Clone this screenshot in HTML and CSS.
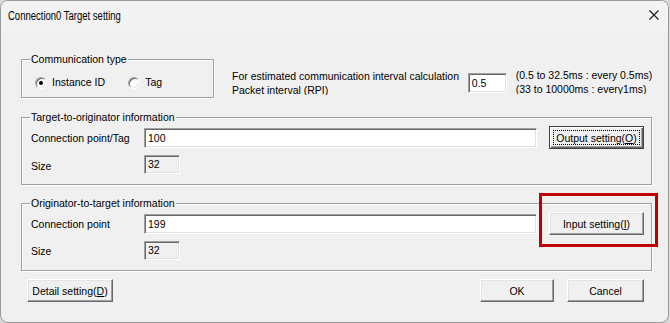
FILE: index.html
```html
<!DOCTYPE html>
<html>
<head>
<meta charset="utf-8">
<link rel="stylesheet" href="styles.css">
</head>
<body>
<div class="window">
  <div class="titlebar">
    <span class="title">Connection0 Target setting</span>
    <svg class="close" width="10" height="10" viewBox="0 0 10 10"><path d="M0.5 0.5 L9.5 9.5 M9.5 0.5 L0.5 9.5" stroke="#1a1a1a" stroke-width="1.1" fill="none"/></svg>
  </div>
  <div class="content">
    <div class="top-row">
      <fieldset class="group group-type">
        <legend>Communication type</legend>
        <div class="radios">
          <label class="radio-item"><span class="radio checked"></span>Instance ID</label>
          <label class="radio-item"><span class="radio"></span>Tag</label>
        </div>
      </fieldset>
      <div class="rpi-label">For estimated communication interval calculation<br>Packet interval (RPI)</div>
      <div class="field rpi-input">0.5</div>
      <div class="rpi-range">(0.5 to 32.5ms : every 0.5ms)<br>(33 to 10000ms : every1ms)</div>
    </div>

    <fieldset class="group info info-t2o">
      <legend>Target-to-originator information</legend>
      <div class="info-grid">
        <span class="lbl">Connection point/Tag</span>
        <div class="field">100</div>
        <button class="btn btn-side default"><span class="focus">Output setting(<u>O</u>)</span></button>
        <span class="lbl lbl-low">Size</span>
        <div class="field disabled size">32</div>
      </div>
    </fieldset>

    <fieldset class="group info info-o2t">
      <legend>Originator-to-target information</legend>
      <div class="info-grid">
        <span class="lbl">Connection point</span>
        <div class="field">199</div>
        <button class="btn btn-side">Input setting(<u>I</u>)</button>
        <span class="lbl">Size</span>
        <div class="field disabled size">32</div>
      </div>
    </fieldset>

    <div class="bottom">
      <button class="btn btn-detail">Detail setting(<u>D</u>)</button>
      <button class="btn btn-ok">OK</button>
      <button class="btn btn-cancel">Cancel</button>
    </div>
  </div>
  <div class="highlight"></div>
</div>
</body>
</html>
```

FILE: styles.css
```css
html, body {
  margin: 0;
  padding: 0;
}
body {
  background: #d9d9d9;
  font-family: "Liberation Sans", Arial, sans-serif;
  font-size: 10.5px;
  color: #000;
}
.window {
  position: relative;
  width: 669px;
  height: 323px;
  box-sizing: border-box;
  border: 1px solid #9a9a9a;
  border-radius: 8px;
  background: #f0f0f0;
  overflow: hidden;
}
.titlebar {
  height: 30px;
  background: #f3f3f3;
  display: flex;
  align-items: center;
  padding-left: 7px;
}
.title {
  font-family: "Liberation Sans", Arial, sans-serif;
  font-size: 12.5px;
  color: #000;
  display: inline-block;
  transform: scaleX(0.76);
  transform-origin: left center;
  white-space: nowrap;
}
.close {
  margin-left: auto;
  margin-right: 9px;
  margin-top: -2px;
}
.content {
  padding: 22px 16px 0 20px;
}
.top-row {
  display: flex;
  align-items: flex-start;
}
.group {
  margin: 0;
  min-width: 0;
  border: 1px solid #a0a0a0;
  box-shadow: 1px 1px 0 #ffffff, inset 1px 1px 0 #ffffff;
  padding: 0 7px 8px 8px;
}
.group legend {
  padding: 0 1px;
  line-height: 13px;
  background: #f0f0f0;
  position: relative;
}
.group-type {
  width: 193px;
  box-sizing: border-box;
  flex: none;
}
.radios {
  display: flex;
  gap: 23px;
  margin-top: 10px;
  padding-left: 5px;
  line-height: 13px;
}
.radio-item {
  display: flex;
  align-items: center;
  gap: 5px;
}
.radio {
  position: relative;
  width: 12px;
  height: 12px;
  box-sizing: border-box;
  border-radius: 50%;
  border: 1px solid;
  border-color: #a0a0a0 #ffffff #ffffff #a0a0a0;
  background: #ffffff;
  box-shadow: inset 1px 1px 0 #696969, inset -1px -1px 0 #e3e3e3;
}
.radio.checked::after {
  content: "";
  position: absolute;
  left: 3px;
  top: 3px;
  width: 4px;
  height: 4px;
  border-radius: 50%;
  background: #000;
}
.rpi-label {
  margin-left: 18px;
  margin-top: 17px;
  line-height: 13.5px;
  height: 25px;
  overflow: hidden;
  white-space: nowrap;
}
.rpi-input {
  margin-left: 9px;
  margin-top: 20px;
  width: 39px;
  flex: none;
}
.rpi-range {
  margin-left: 9px;
  margin-top: 16px;
  line-height: 13.5px;
  height: 25px;
  overflow: hidden;
  white-space: nowrap;
}
.field {
  height: 20px;
  box-sizing: border-box;
  background: #ffffff;
  border: 1px solid;
  border-color: #a0a0a0 #ffffff #ffffff #a0a0a0;
  box-shadow: inset 1px 1px 0 #696969, inset -1px -1px 0 #e3e3e3;
  padding: 0 2px 0 3px;
  line-height: 18px;
  white-space: nowrap;
}
.field.disabled {
  background: #f0f0f0;
}
.field.size {
  width: 36px;
  height: 19px;
  line-height: 17px;
}
.info {
  width: 631px;
  box-sizing: border-box;
  padding: 2px 7px 10px 8px;
}
.info-t2o {
  margin-top: 13px;
}
.info-o2t {
  margin-top: 12px;
}
.info-grid {
  display: grid;
  grid-template-columns: 114px 393px 1fr;
  grid-template-rows: 23px 19px;
  row-gap: 6px;
  align-items: center;
}
.lbl {
  padding-left: 1px;
  white-space: nowrap;
}
.lbl-low {
  padding-top: 3px;
}
.btn {
  font-family: "Liberation Sans", Arial, sans-serif;
  font-size: 10.5px;
  color: #000;
  height: 23px;
  box-sizing: border-box;
  background: #f0f0f0;
  border: 1px solid;
  border-color: #ffffff #696969 #696969 #ffffff;
  box-shadow: inset -1px -1px 0 #a0a0a0, inset 1px 1px 0 #e3e3e3;
  padding: 0;
  margin: 0;
  display: flex;
  align-items: center;
  justify-content: center;
  white-space: nowrap;
}
.btn u {
  text-decoration: underline;
  text-underline-offset: 1px;
}
.btn-side {
  width: 95px;
  justify-self: end;
}
.btn.default {
  border: 1px solid #404040;
  box-shadow: inset 1px 1px 0 #ffffff, inset -1px -1px 0 #696969, inset -2px -2px 0 #a0a0a0;
  padding: 3px;
}
.focus {
  flex: 1;
  align-self: stretch;
  display: flex;
  align-items: center;
  justify-content: center;
  outline: 1px dotted #000;
  outline-offset: -1px;
}
.bottom {
  display: flex;
  margin-top: 8px;
  padding: 0 8px 0 6px;
}
.btn-detail {
  width: 86px;
}
.btn-ok {
  width: 74px;
  margin-left: auto;
}
.btn-cancel {
  width: 77px;
  margin-left: 13px;
}
.highlight {
  position: absolute;
  left: 538px;
  top: 192px;
  width: 119px;
  height: 54px;
  box-sizing: border-box;
  border: 3px solid #c00000;
}
```
